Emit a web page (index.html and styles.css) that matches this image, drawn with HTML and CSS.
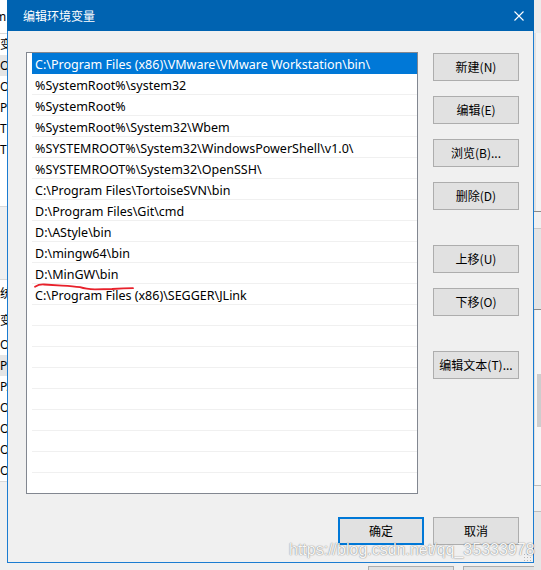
FILE: index.html
```html
<!DOCTYPE html>
<html lang="zh-CN">
<head>
<meta charset="utf-8">
<title>编辑环境变量</title>
<link rel="stylesheet" href="styles.css">
</head>
<body>
<div class="screen">
  <div class="bg-left">
    <div class="bl-top"><span class="cut">m</span></div>
    <div class="bl-row">变</div>
    <div class="bl-row hl">O</div>
    <div class="bl-row">O</div>
    <div class="bl-row">Pa</div>
    <div class="bl-row">TE</div>
    <div class="bl-row">TM</div>
    <div class="bl-gap1"></div>
    <div class="bl-gap2"></div>
    <div class="bl-row2">统</div>
    <div class="bl-row3">变</div>
    <div class="bl-row">O</div>
    <div class="bl-row hl">Pa</div>
    <div class="bl-row">PA</div>
    <div class="bl-row">OF</div>
    <div class="bl-row">OF</div>
    <div class="bl-row">OF</div>
    <div class="bl-row">OF</div>
    <div class="bl-end"></div>
  </div>

  <div class="dialog">
    <div class="titlebar">
      <div class="title">编辑环境变量</div>
      <div class="close">
        <svg width="10" height="10" viewBox="0 0 10 10"><path d="M0.5 0.5 L9.5 9.5 M9.5 0.5 L0.5 9.5" stroke="#fff" stroke-width="1.1" fill="none"/></svg>
      </div>
    </div>
    <div class="content">
      <div class="main">
        <div class="list">
          <div class="row sel">C:\Program Files (x86)\VMware\VMware Workstation\bin\</div>
          <div class="row">%SystemRoot%\system32</div>
          <div class="row">%SystemRoot%</div>
          <div class="row">%SystemRoot%\System32\Wbem</div>
          <div class="row">%SYSTEMROOT%\System32\WindowsPowerShell\v1.0\</div>
          <div class="row">%SYSTEMROOT%\System32\OpenSSH\</div>
          <div class="row">C:\Program Files\TortoiseSVN\bin</div>
          <div class="row">D:\Program Files\Git\cmd</div>
          <div class="row">D:\AStyle\bin</div>
          <div class="row">D:\mingw64\bin</div>
          <div class="row">D:\MinGW\bin</div>
          <div class="row">C:\Program Files (x86)\SEGGER\JLink</div>
          <div class="row"></div>
          <div class="row"></div>
          <div class="row"></div>
          <div class="row"></div>
          <div class="row"></div>
          <div class="row"></div>
          <div class="row"></div>
          <div class="row"></div>
        </div>
        <div class="side">
          <div class="btn">新建(N)</div>
          <div class="btn">编辑(E)</div>
          <div class="btn">浏览(B)...</div>
          <div class="btn">删除(D)</div>
          <div class="btn sep">上移(U)</div>
          <div class="btn">下移(O)</div>
          <div class="btn sep">编辑文本(T)...</div>
        </div>
      </div>
      <div class="footer">
        <div class="btn default">确定</div>
        <div class="btn">取消</div>
      </div>
    </div>
  </div>

  <div class="bg-right">
    <div class="br-a"></div>
    <div class="br-b"></div>
    <div class="br-c"></div>
    <div class="br-d"></div>
    <div class="br-e"><div class="thumb"></div></div>
    <div class="br-f"></div>
    <div class="br-g"></div>
  </div>

  <div class="bg-bottom">
    <div class="bb-btn"></div>
    <div class="bb-btn"></div>
  </div>

  <svg class="mark" width="541" height="570" viewBox="0 0 541 570">
    <path d="M35 286.8 Q39 284.2 44 284.5 Q52 285 62 285.6 Q74 286.3 80 287.2 Q86 289.2 95 289.3 L112 289 Q124 288.3 133 288.2" stroke="#e8212b" stroke-width="1.8" fill="none" stroke-linecap="round"/>
  </svg>
  <div class="grip"></div>
  <div class="watermark">https://blog.csdn.net/qq_35333978</div>
</div>
</body>
</html>
```

FILE: styles.css
```css
* { box-sizing: border-box; }
html, body { margin: 0; padding: 0; }
body {
  width: 541px;
  height: 570px;
  overflow: hidden;
  background: #f0f0f0;
  font-family: "Noto Sans", "Noto Sans CJK SC", sans-serif;
  font-size: 12px;
  color: #000;
}
.screen {
  position: relative;
  display: grid;
  grid-template-columns: 7px 527px 7px;
  grid-template-rows: 563px 7px;
  width: 541px;
  height: 570px;
}

/* background window on the left */
.bg-left {
  grid-row: 1 / 3;
  grid-column: 1;
  background: #fff;
  overflow: hidden;
  display: flex;
  flex-direction: column;
  font-family: "Noto Sans", "Noto Sans CJK SC", sans-serif;
  font-size: 12px;
  white-space: nowrap;
}
.bl-top { height: 34px; line-height: 34px; border-bottom: 1px solid #d9d9d9; background: #fff; flex: none; }
.cut { display: inline-block; margin-left: -5px; }
.bl-row { height: 21px; line-height: 21px; flex: none; }
.bl-row.hl { background: #e5e5e5; }
.bl-gap1 { height: 47px; flex: none; border-bottom: 1px solid #d9d9d9; }
.bl-gap2 { height: 73px; flex: none; border-bottom: 1px solid #d9d9d9; background: #f0f0f0; }
.bl-row2 { height: 28px; line-height: 28px; flex: none; }
.bl-row3 { height: 26px; line-height: 26px; flex: none; }
.bl-end { flex: 1; border-top: 1px solid #d9d9d9; background: #f0f0f0; }

/* dialog */
.dialog {
  grid-row: 1;
  grid-column: 2;
  background: #f0f0f0;
  border: 1px solid #1b7cd1;
  border-top: 0;
  display: flex;
  flex-direction: column;
}
.titlebar {
  height: 31px;
  margin: 0 -1px;
  background: #0063b1;
  color: #fff;
  display: flex;
  align-items: center;
  padding-left: 16px;
  flex: none;
}
.title { flex: 1; font-family: "Noto Sans CJK SC", sans-serif; font-size: 12px; line-height: 14px; }
.close { width: 31px; height: 31px; display: flex; align-items: center; justify-content: center; padding-left: 1px; }
.close svg { display: block; }

.content {
  flex: 1;
  display: flex;
  flex-direction: column;
  padding: 21px 14px 0 18px;
}
.main { display: flex; gap: 15px; }
.list {
  width: 392px;
  height: 442px;
  flex: none;
  border: 1px solid #828790;
  background: #fff;
  padding-left: 5px;
  overflow: hidden;
}
.row {
  height: 21px;
  border-bottom: 1px solid #f0f0f0;
  padding-left: 3px;
  line-height: 24px;
  white-space: nowrap;
  overflow: hidden;
  font-family: "Noto Sans", "Noto Sans CJK SC", sans-serif;
  font-size: 12.5px;
}
.row.sel { background: #0078d7; color: #fff; border-bottom-color: #0078d7; }

.side { width: 86px; flex: none; display: flex; flex-direction: column; padding-top: 1px; }
.btn {
  width: 86px;
  height: 28px;
  flex: none;
  background: #e1e1e1;
  border: 1px solid #adadad;
  display: flex;
  align-items: center;
  justify-content: center;
  padding-bottom: 1px;
  font-family: "Noto Sans CJK SC", sans-serif;
  font-size: 12px;
  line-height: 14px;
  white-space: nowrap;
}
.btn + .btn { margin-top: 15px; }
.btn.sep { margin-top: 35px; }

.footer { display: flex; justify-content: flex-end; gap: 9px; margin-top: 23px; }
.footer .btn + .btn { margin-top: 0; }
.btn.default { border: 2px solid #0078d7; }

/* background window on the right */
.bg-right {
  grid-row: 1 / 3;
  grid-column: 3;
  background: #f0f0f0;
  display: flex;
  flex-direction: column;
  overflow: hidden;
}
.br-a { height: 33px; flex: none; background: #ececec; }
.br-b { height: 178px; flex: none; border-left: 2px solid #e2e2e2; background: #f3f3f3; }
.br-c { height: 17px; flex: none; border-top: 1px solid #8a8a8a; background: #f0f0f0; }
.br-d { height: 82px; flex: none; border-top: 1px solid #c8c8c8; background: #e4e4e4; border-bottom: 1px solid #8a8a8a; }
.br-e { height: 175px; flex: none; background: #f5f5f5; border-left: 1px solid #e0e0e0; display: flex; flex-direction: column; align-items: flex-end; padding-top: 64px; }
.thumb { width: 4px; height: 53px; background: #cdcdcd; }
.br-f { height: 27px; flex: none; border-top: 1px solid #bdbdbd; background: #f0f0f0; border-bottom: 1px solid #bdbdbd; }
.br-g { flex: 1; background: #e6e6e6; }

/* background strip below the dialog */
.bg-bottom {
  grid-row: 2;
  grid-column: 2;
  background: #f0f0f0;
  display: flex;
  gap: 9px;
  padding: 3px 0 0 361px;
  overflow: hidden;
}
.bb-btn { width: 86px; height: 10px; flex: none; background: #e1e1e1; border: 1px solid #adadad; }

/* overlays */
.mark { position: absolute; left: 0; top: 0; pointer-events: none; }
.grip {
  position: absolute;
  left: 523px;
  top: 553px;
  width: 8px;
  height: 8px;
  background-image: radial-gradient(circle, #b4b4b4 0.8px, transparent 1px);
  background-size: 3px 3px;
}
.watermark {
  position: absolute;
  left: 289px;
  top: 542px;
  font-family: "Liberation Sans", Arial, sans-serif;
  font-size: 16px;
  line-height: 16px;
  color: rgba(255, 255, 255, 0.95);
  text-shadow: 0 0 1px rgba(0, 0, 0, 0.5), 0 0 2px rgba(0, 0, 0, 0.2);
  white-space: nowrap;
  pointer-events: none;
}
```
